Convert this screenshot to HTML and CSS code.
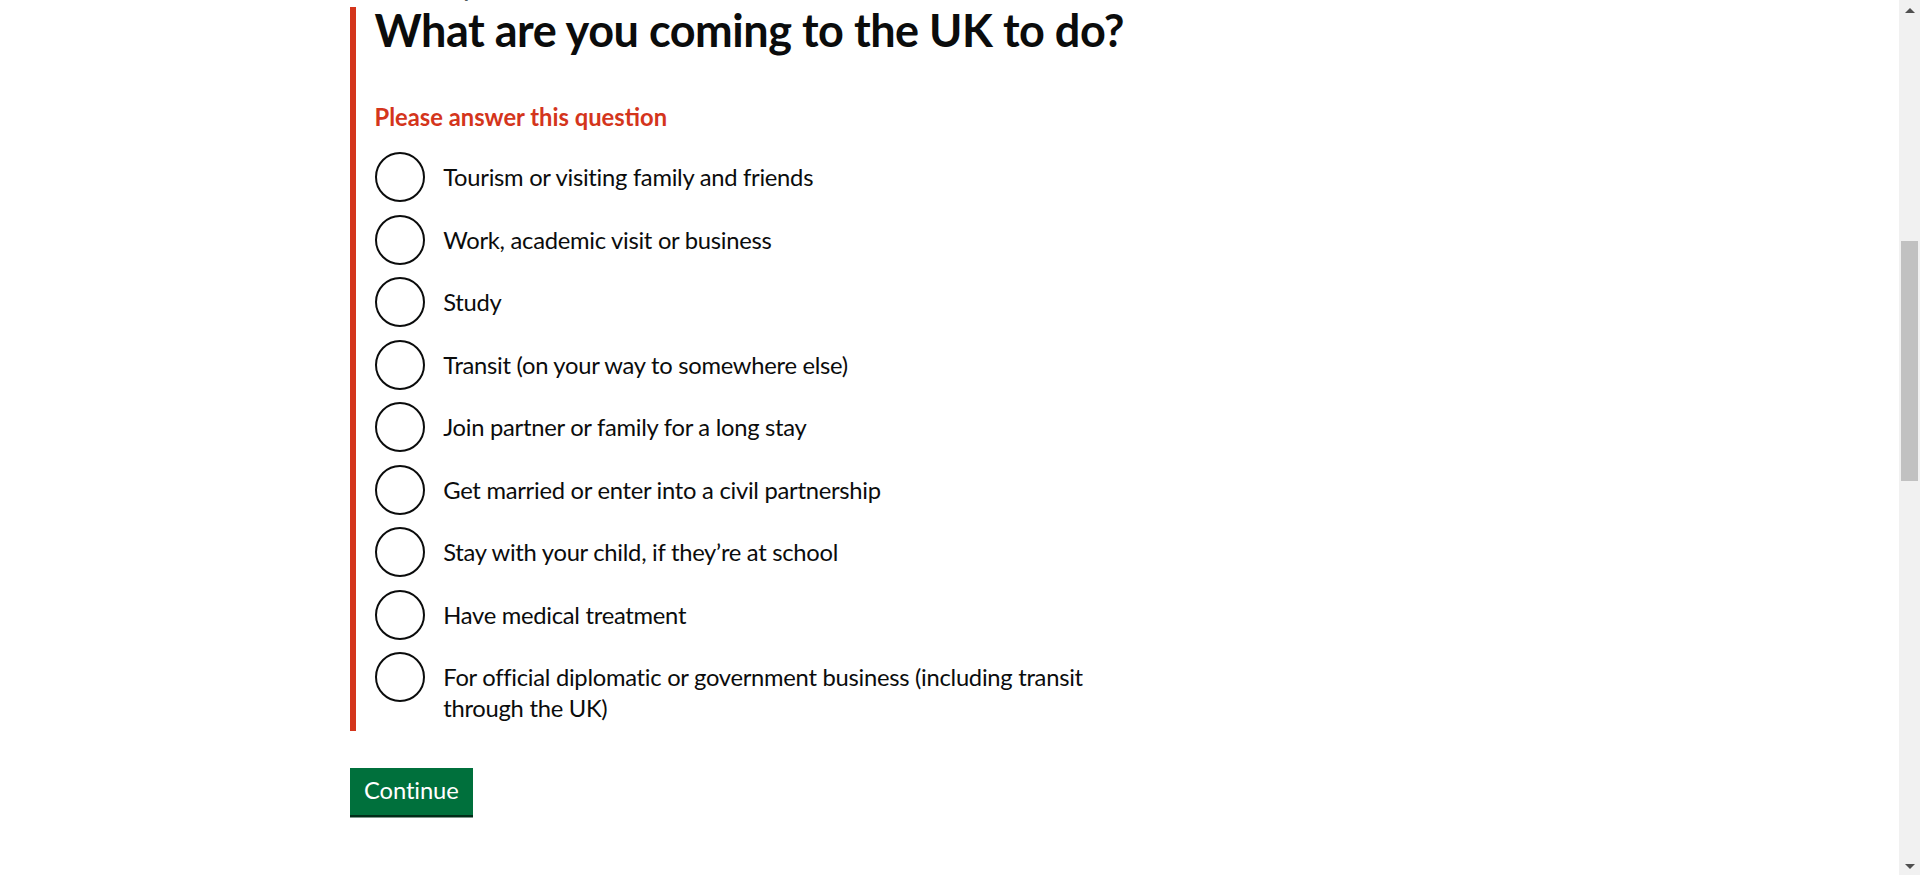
FILE: index.html
```html
<!DOCTYPE html>
<html lang="en">
<head>
<meta charset="utf-8">
<title>What are you coming to the UK to do? - Check if you need a UK visa - GOV.UK</title>
<link rel="stylesheet" href="styles.css">
</head>
<body>
<header class="site-header">
  <div class="width-container header-inner">
    <span class="logo">GOV.UK</span>
  </div>
</header>
<div class="width-container">
  <main class="main">
    <section class="answers">
      <h2 class="answers-title">Check if you need a UK visa</h2>
      <p class="answers-text">You may need a visa to come to the UK to visit, study or work.</p>
    </section>
    <form class="question">
      <span class="caption">Check if you need a UK visa</span>
      <div class="form-group form-group--error" id="question-group">
        <fieldset class="fieldset">
          <legend class="legend"><h1 class="heading">What are you coming to the UK to do?</h1></legend>
          <p class="error-message">Please answer this question</p>
          <div class="radios">
            <div class="radio-item"><input class="radio-input" type="radio" id="p1" name="purpose"><label class="radio-label" for="p1">Tourism or visiting family and friends</label></div>
            <div class="radio-item"><input class="radio-input" type="radio" id="p2" name="purpose"><label class="radio-label" for="p2">Work, academic visit or business</label></div>
            <div class="radio-item"><input class="radio-input" type="radio" id="p3" name="purpose"><label class="radio-label" for="p3">Study</label></div>
            <div class="radio-item"><input class="radio-input" type="radio" id="p4" name="purpose"><label class="radio-label" for="p4">Transit (on your way to somewhere else)</label></div>
            <div class="radio-item"><input class="radio-input" type="radio" id="p5" name="purpose"><label class="radio-label" for="p5">Join partner or family for a long stay</label></div>
            <div class="radio-item"><input class="radio-input" type="radio" id="p6" name="purpose"><label class="radio-label" for="p6">Get married or enter into a civil partnership</label></div>
            <div class="radio-item"><input class="radio-input" type="radio" id="p7" name="purpose"><label class="radio-label" for="p7">Stay with your child, if they’re at school</label></div>
            <div class="radio-item"><input class="radio-input" type="radio" id="p8" name="purpose"><label class="radio-label" for="p8">Have medical treatment</label></div>
            <div class="radio-item"><input class="radio-input" type="radio" id="p9" name="purpose"><label class="radio-label" for="p9">For official diplomatic or government business (including transit through the UK)</label></div>
          </div>
        </fieldset>
      </div>
      <button class="button" type="submit">Continue</button>
    </form>
  </main>
</div>
<footer class="footer">
  <div class="width-container footer-inner">
    <p class="footer-text">All content is available under the Open Government Licence v3.0, except where otherwise stated</p>
    <p class="footer-text">© Crown copyright</p>
  </div>
</footer>
<div class="scrollbar" aria-hidden="true">
  <div class="sb-button"><span class="sb-arrow sb-arrow--up"></span></div>
  <div class="sb-track"><div class="sb-thumb"></div></div>
  <div class="sb-button"><span class="sb-arrow sb-arrow--down"></span></div>
</div>
<script src="script.js"></script>
</body>
</html>
```
FILE: styles.css
```css
html { background: #ffffff; }
body {
  margin: 0;
  padding-right: 21px;
  font-family: Lato, "Liberation Sans", Arial, sans-serif;
  color: #0b0c0c;
  letter-spacing: -0.27px;
}
.width-container { max-width: 1200px; margin: 0 auto; }
.site-header { background: #0b0c0c; border-bottom: 12px solid #1d70b8; }
.header-inner { height: 75px; display: flex; align-items: center; }
.logo { color: #fff; font-weight: 700; font-size: 37px; }
.main { padding-top: 25px; padding-bottom: 75px; }
.answers { min-height: 670px; }
.answers-title { margin: 0 0 20px; font-size: 30px; }
.answers-text { margin: 0; font-size: 23.75px; }
.question { width: 788px; }
.caption {
  display: block;
  color: #505a5f;
  font-size: 30px;
  line-height: 37.5px;
  margin-bottom: 3px;
}
.form-group--error {
  border-left: 6px solid #d4351c;
  padding-left: 19px;
  margin-bottom: 37.5px;
}
.fieldset { margin: 0; padding: 0; border: 0; min-width: 0; }
.legend { padding: 0; margin: 0; }
.heading {
  margin: 0 0 49.5px;
  font-size: 45px;
  line-height: 46px;
  font-weight: 700;
  letter-spacing: -0.47px;
  white-space: nowrap;
}
.error-message {
  margin: 0 0 18.75px;
  color: #d4351c;
  font-weight: 700;
  font-size: 23.75px;
  line-height: 31.25px;
  letter-spacing: 0;
}
.radios { display: flex; flex-direction: column; gap: 12.5px; }
.radio-item { display: flex; align-items: flex-start; min-height: 50px; }
.radio-input {
  appearance: none;
  -webkit-appearance: none;
  margin: 0;
  flex: 0 0 50px;
  width: 50px;
  height: 50px;
  box-sizing: border-box;
  border: 2.5px solid #0b0c0c;
  border-radius: 50%;
  background: #fff;
}
.radio-label {
  padding: 10px 18.75px 6.25px;
  font-size: 23.75px;
  line-height: 31.25px;
}
.button {
  font-family: inherit;
  font-size: 23.75px;
  line-height: 23.75px;
  letter-spacing: -0.1px;
  color: #fff;
  background: #00703c;
  border: 2.5px solid transparent;
  border-radius: 0;
  box-shadow: 0 2.5px 0 #002d18;
  padding: 8.75px 12.5px 10px;
  margin: 0;
  cursor: pointer;
}
.footer {
  background: #f3f2f1;
  border-top: 12px solid #1d70b8;
  min-height: 1250px;
}
.footer-inner { padding-top: 50px; }
.footer-text { margin: 0 0 20px; font-size: 20px; color: #0b0c0c; }

/* window scrollbar (page is shown scrolled) */
.scrollbar {
  position: fixed;
  top: 0;
  right: 0;
  width: 21px;
  height: 100vh;
  background: #f1f1f1;
  display: flex;
  flex-direction: column;
}
.sb-button {
  height: 21px;
  flex: 0 0 21px;
  display: flex;
  align-items: center;
  justify-content: center;
}
.sb-arrow { width: 0; height: 0; border-left: 5px solid transparent; border-right: 5px solid transparent; }
.sb-arrow--up { border-bottom: 5px solid #505050; margin-top: -1px; }
.sb-arrow--down { border-top: 5px solid #505050; margin-bottom: -4px; }
.sb-track { flex: 1; padding: 0 2px; }
.sb-thumb { margin-top: 220px; height: 240px; background: #c1c1c1; }
```
FILE: script.js
```js
(function () {
  if ('scrollRestoration' in history) { history.scrollRestoration = 'manual'; }
  function place() {
    var el = document.getElementById('question-group');
    var top = el.getBoundingClientRect().top + window.pageYOffset;
    window.scrollTo(0, top - 7);
  }
  place();
  window.addEventListener('load', place);
})();
```
